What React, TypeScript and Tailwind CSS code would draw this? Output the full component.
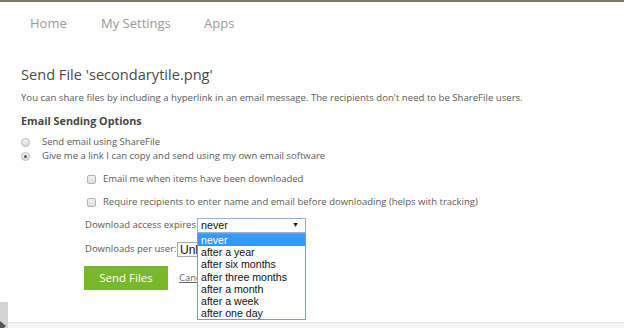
const options = [
  "never",
  "after a year",
  "after six months",
  "after three months",
  "after a month",
  "after a week",
  "after one day",
];

function Radio({ checked }: { checked?: boolean }) {
  return (
    <span className="flex h-[9px] w-[9px] items-center justify-center rounded-full border border-[#b8b8b8] bg-gradient-to-b from-[#f4f4f4] to-[#dedede]">
      {checked ? <span className="h-[3px] w-[3px] rounded-full bg-[#555]" /> : null}
    </span>
  );
}

function Checkbox() {
  return (
    <span className="block h-[9px] w-[9px] shrink-0 rounded-[2px] border border-[#b4b4b4] bg-gradient-to-b from-[#f3f3f3] to-[#dcdcdc]" />
  );
}

export default function App() {
  return (
    <div className="h-[328px] w-[624px] overflow-hidden bg-white font-['Open_Sans',sans-serif] text-[#5b5b5b]">
      <div className="h-[2px] bg-[#7e776c]" />

      <nav className="flex h-[44px] items-center pl-[30px] text-[13px] text-[#9b9b9b]">
        <span className="w-[71px]">Home</span>
        <span className="w-[103px]">My Settings</span>
        <span>Apps</span>
      </nav>

      <div className="pl-[21px]">
        <h1 className="mt-[18px] text-[14.6px] leading-[20px] text-[#4a4a4a]">
          Send File 'secondarytile.png'
        </h1>
        <p className="mt-[7px] text-[9.6px] leading-[14px]">
          You can share files by including a hyperlink in an email message. The recipients don't
          need to be ShareFile users.
        </p>
        <h2 className="mt-[8px] text-[10.8px] font-bold leading-[16px] text-[#474747]">
          Email Sending Options
        </h2>

        <div className="mt-[6px] whitespace-nowrap text-[9.5px]">
          <label className="flex h-[14px] items-center">
            <span className="w-[21px]">
              <Radio />
            </span>
            Send email using ShareFile
          </label>
          <label className="flex h-[14px] items-center">
            <span className="w-[21px]">
              <Radio checked />
            </span>
            Give me a link I can copy and send using my own email software
          </label>

          <label className="ml-[66px] mt-[9px] flex h-[14px] items-center gap-[7px]">
            <Checkbox />
            Email me when items have been downloaded
          </label>
          <label className="ml-[66px] mt-[9px] flex h-[14px] items-center gap-[7px]">
            <Checkbox />
            Require recipients to enter name and email before downloading (helps with tracking)
          </label>

          <div className="ml-[64px] mt-[9px] flex h-[15px] items-center">
            <span className="w-[112px] shrink-0 text-[9.5px]">Download access expires</span>
            <div className="relative z-10">
              <div className="flex h-[15px] w-[109px] items-center justify-between border border-[#8fb2dd] bg-white pl-[3px] pr-[6px] font-['Liberation_Sans',Arial,sans-serif] text-[10.7px] text-[#111]">
                <span>never</span>
                <span className="text-[7px]">▼</span>
              </div>
              <ul className="absolute left-0 top-full w-[109px] border border-[#7f9db9] bg-white font-['Liberation_Sans',Arial,sans-serif] text-[10.6px] leading-[12.2px] text-[#111]">
                {options.map((o, i) => (
                  <li
                    key={o}
                    className={i === 0 ? "bg-[#3399ff] pl-[3px] text-white" : "pl-[3px]"}
                  >
                    {o}
                  </li>
                ))}
              </ul>
            </div>
          </div>

          <div className="ml-[64px] mt-[9px] flex h-[15px] items-center">
            <span className="w-[92px] shrink-0 text-[9.5px]">Downloads per user:</span>
            <div className="w-[20px] overflow-hidden">
              <div className="flex h-[15px] w-[100px] items-center border border-[#a9a9a9] bg-white pl-[2px] font-['Liberation_Sans',Arial,sans-serif] text-[12px] text-[#111]">
                Unlimited
              </div>
            </div>
          </div>

          <div className="ml-[63px] mt-[9px] flex items-center">
            <button className="h-[24px] w-[84px] bg-[#78b82a] text-[11.5px] text-white">
              Send Files
            </button>
            <span className="ml-[11px] w-[18px] overflow-hidden">
              <a className="text-[9.5px] text-[#666] underline">Cancel</a>
            </span>
          </div>
        </div>
      </div>

      <div className="mt-[12px] flex h-[26px]">
        <div className="relative w-[8px] bg-[#d4d4d4]">
          <span className="absolute bottom-[-3px] left-0 h-0 w-0 border-y-[5px] border-l-[6px] border-y-transparent border-l-[#555]" />
        </div>
        <div className="h-[6px] flex-1 self-end border-t border-[#e6e6e6] bg-[#f4f4f4]" />
      </div>
    </div>
  );
}
